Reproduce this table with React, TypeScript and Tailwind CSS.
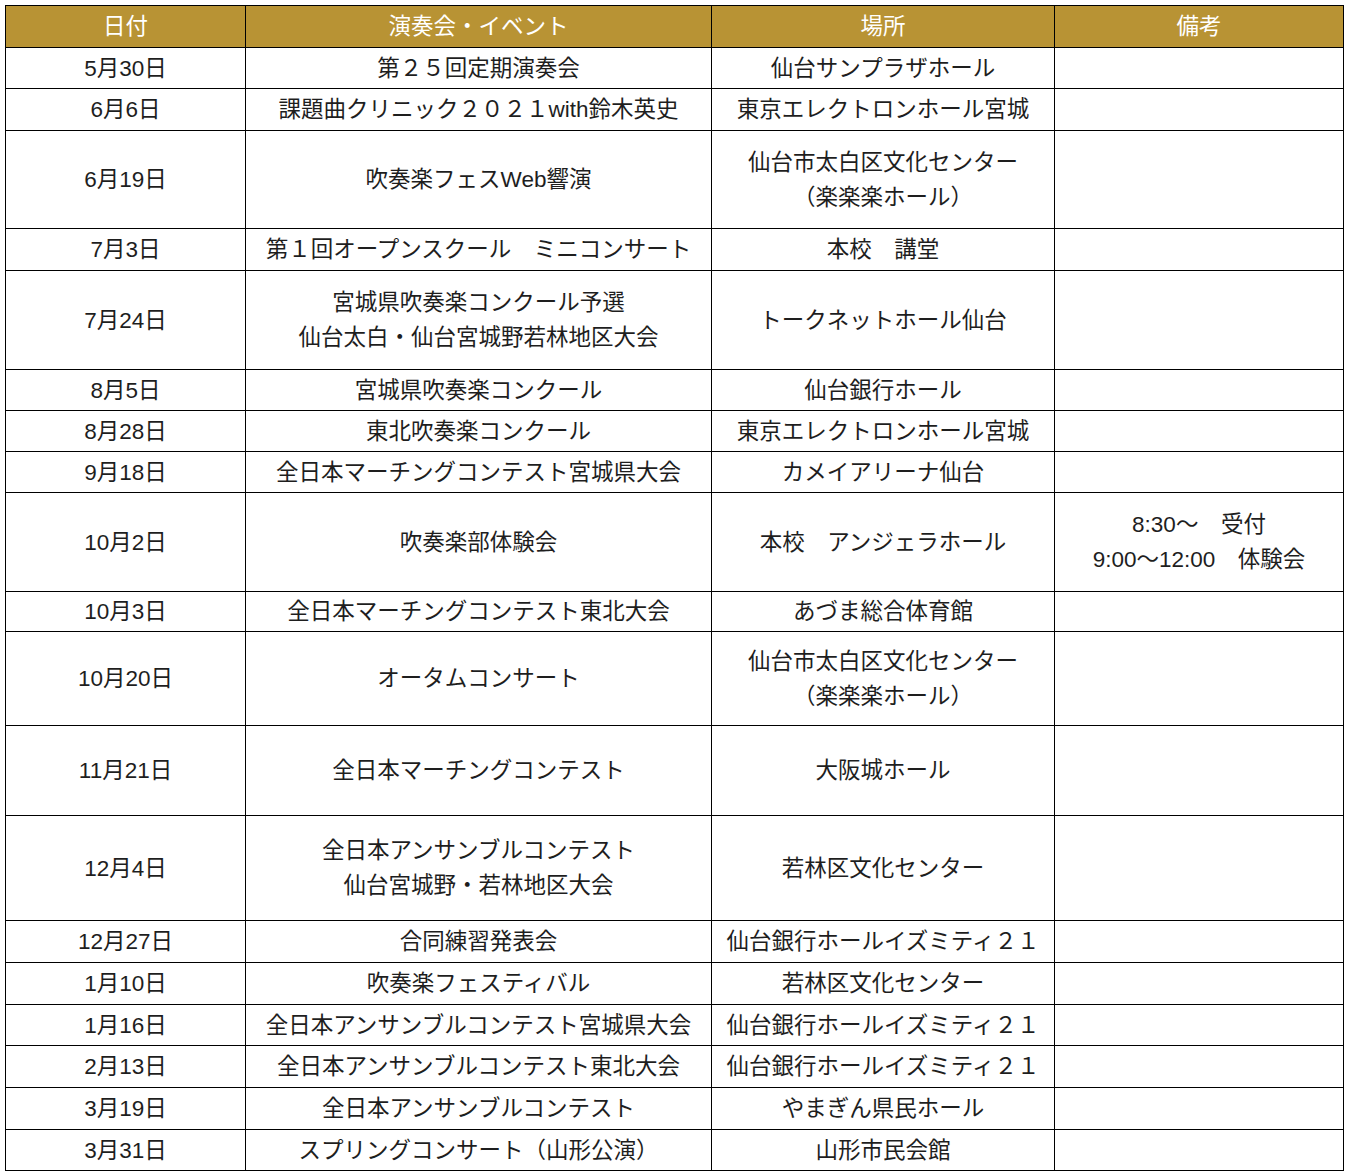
import React from "react";

type Row = { h: string; date: string; event: string[]; place: string[]; note?: string[] };

const rows: Row[] = [
  { h: "h-[41px]", date: "5月30日", event: ["第２５回定期演奏会"], place: ["仙台サンプラザホール"] },
  { h: "h-[42px]", date: "6月6日", event: ["課題曲クリニック２０２１with鈴木英史"], place: ["東京エレクトロンホール宮城"] },
  { h: "h-[98px]", date: "6月19日", event: ["吹奏楽フェスWeb響演"], place: ["仙台市太白区文化センター", "（楽楽楽ホール）"] },
  { h: "h-[42px]", date: "7月3日", event: ["第１回オープンスクール　ミニコンサート"], place: ["本校　講堂"] },
  { h: "h-[99px]", date: "7月24日", event: ["宮城県吹奏楽コンクール予選", "仙台太白・仙台宮城野若林地区大会"], place: ["トークネットホール仙台"] },
  { h: "h-[41px]", date: "8月5日", event: ["宮城県吹奏楽コンクール"], place: ["仙台銀行ホール"] },
  { h: "h-[41px]", date: "8月28日", event: ["東北吹奏楽コンクール"], place: ["東京エレクトロンホール宮城"] },
  { h: "h-[41px]", date: "9月18日", event: ["全日本マーチングコンテスト宮城県大会"], place: ["カメイアリーナ仙台"] },
  { h: "h-[99px]", date: "10月2日", event: ["吹奏楽部体験会"], place: ["本校　アンジェラホール"], note: ["8:30〜　受付", "9:00〜12:00　体験会"] },
  { h: "h-[40px]", date: "10月3日", event: ["全日本マーチングコンテスト東北大会"], place: ["あづま総合体育館"] },
  { h: "h-[94px]", date: "10月20日", event: ["オータムコンサート"], place: ["仙台市太白区文化センター", "（楽楽楽ホール）"] },
  { h: "h-[90px]", date: "11月21日", event: ["全日本マーチングコンテスト"], place: ["大阪城ホール"] },
  { h: "h-[105px]", date: "12月4日", event: ["全日本アンサンブルコンテスト", "仙台宮城野・若林地区大会"], place: ["若林区文化センター"] },
  { h: "h-[42px]", date: "12月27日", event: ["合同練習発表会"], place: ["仙台銀行ホールイズミティ２１"] },
  { h: "h-[42px]", date: "1月10日", event: ["吹奏楽フェスティバル"], place: ["若林区文化センター"] },
  { h: "h-[41px]", date: "1月16日", event: ["全日本アンサンブルコンテスト宮城県大会"], place: ["仙台銀行ホールイズミティ２１"] },
  { h: "h-[42px]", date: "2月13日", event: ["全日本アンサンブルコンテスト東北大会"], place: ["仙台銀行ホールイズミティ２１"] },
  { h: "h-[42px]", date: "3月19日", event: ["全日本アンサンブルコンテスト"], place: ["やまぎん県民ホール"] },
  { h: "h-[41px]", date: "3月31日", event: ["スプリングコンサート（山形公演）"], place: ["山形市民会館"] },
];

function Lines({ lines }: { lines?: string[] }) {
  if (!lines) return null;
  return (
    <>
      {lines.map((l, i) => (
        <div key={i}>{l}</div>
      ))}
    </>
  );
}

export default function App() {
  const td = "border border-black text-center align-middle p-0 whitespace-nowrap";
  return (
    <div className="bg-white w-[1350px] min-h-[1176px] pt-[5px] pl-[5px]">
      <table
        className="border-collapse table-fixed w-[1338px] text-[22.5px] leading-[35px] text-[#1e1e1e]"
        style={{ fontFamily: '"Liberation Sans", "Noto Sans CJK JP", sans-serif' }}
      >
        <colgroup>
          <col className="w-[240px]" />
          <col className="w-[466px]" />
          <col className="w-[343px]" />
          <col className="w-[289px]" />
        </colgroup>
        <thead>
          <tr className="h-[42px] bg-[#b89334] text-white">
            <th className={td + " font-normal"}>日付</th>
            <th className={td + " font-normal"}>演奏会・イベント</th>
            <th className={td + " font-normal"}>場所</th>
            <th className={td + " font-normal"}>備考</th>
          </tr>
        </thead>
        <tbody>
          {rows.map((r, i) => (
            <tr key={i} className={r.h}>
              <td className={td}>{r.date}</td>
              <td className={td}>
                <Lines lines={r.event} />
              </td>
              <td className={td}>
                <Lines lines={r.place} />
              </td>
              <td className={td}>
                <Lines lines={r.note} />
              </td>
            </tr>
          ))}
        </tbody>
      </table>
    </div>
  );
}
